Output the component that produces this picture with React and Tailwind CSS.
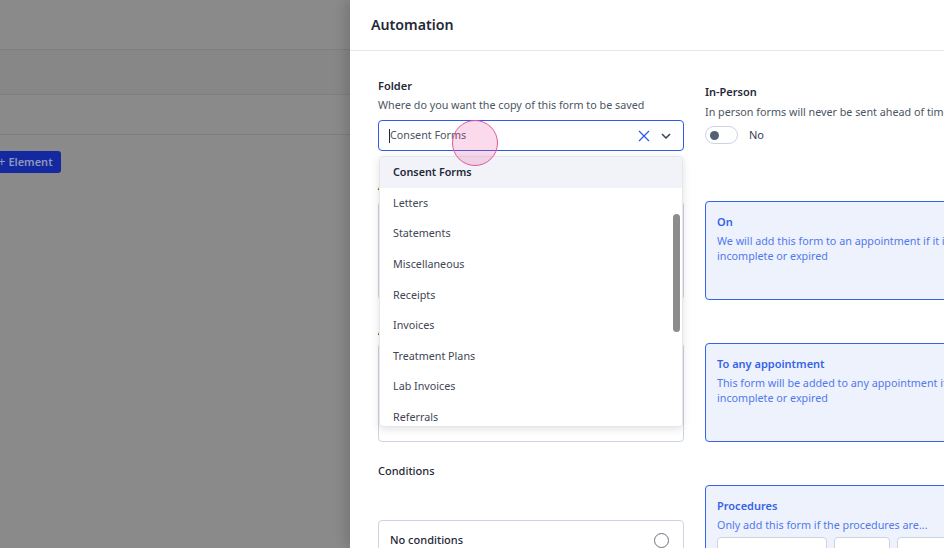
import React from 'react';

const FOLDERS = ['Consent Forms', 'Letters', 'Statements', 'Miscellaneous', 'Receipts', 'Invoices', 'Treatment Plans', 'Lab Invoices', 'Referrals', 'Other'];

function InfoCard({ title, children, className = '' }) {
  return (
    <div className={`rounded-[4px] border border-[#3563e9] bg-[#eef2fd] px-[11px] pt-[12px] ${className}`}>
      <p className="text-[11px] font-semibold leading-[16px] text-[#3563e9]">{title}</p>
      <p className="mt-[4px] text-[10.75px] leading-[15px] text-[#5079ec]">{children}</p>
    </div>
  );
}

export default function App() {
  return (
    <div className="flex h-[548px] w-[944px] overflow-hidden font-['Noto_Sans',sans-serif]">
      {/* dimmed page behind the drawer */}
      <div className="w-[350px] shrink-0 bg-[#8a8a8a]">
        <div className="h-[50px] border-b border-[#7c7e85]" />
        <div className="h-[45px] border-b border-[#7c7e85] bg-[#878788]" />
        <div className="h-[40px] border-b border-[#7c7e85]" />
        <div className="pt-[16px]">
          <button className="-ml-[10px] flex h-[22px] items-center gap-[3px] rounded-[3px] bg-[#1429a0] pl-[8px] pr-[8px] text-[11px] font-semibold text-[#8f97bd]">
            <span className="text-[13px] font-normal">+</span>
            Element
          </button>
        </div>
      </div>

      {/* drawer */}
      <div className="relative w-[680px] shrink-0 bg-white shadow-[-6px_0_10px_rgba(0,0,0,0.12)]">
        <div className="flex h-[51px] items-center border-b border-[#e2e8f0] px-[21px]">
          <h2 className="text-[14.2px] font-semibold text-[#1f2937]">Automation</h2>
        </div>

        <div className="flex gap-[21px] px-[28px]">
          {/* left column */}
          <div className="w-[306px] shrink-0">
            <p className="mt-[27px] text-[11px] font-semibold leading-[16px] text-[#1f2937]">Folder</p>
            <p className="mt-[3px] text-[10.75px] leading-[16px] text-[#4b5563]">Where do you want the copy of this form to be saved</p>

            <div className="relative mt-[7px]">
              <div className="flex h-[31px] items-center rounded-[4px] border border-[#2f5bea] pl-[10px] pr-[12px]">
                <span className="h-[14px] w-px bg-[#1f2937]" />
                <span className="flex-1 text-[10.75px] text-[#4b5563]">Consent Forms</span>
                <svg width="12" height="12" viewBox="0 0 12 12" fill="none" stroke="#2f5bea" strokeWidth="1.3">
                  <path d="M1 1l10 10M11 1L1 11" />
                </svg>
                <svg className="ml-[11px]" width="10" height="6" viewBox="0 0 10 6" fill="none" stroke="#374151" strokeWidth="1.5">
                  <path d="M1 1l4 4 4-4" />
                </svg>
              </div>

              {/* open dropdown */}
              <div className="absolute left-px right-px top-[36px] z-10 h-[271px] overflow-hidden rounded-[4px] border border-[#e5e7eb] bg-white shadow-[0_2px_8px_rgba(0,0,0,0.12)]">
                {FOLDERS.map((f, i) => (
                  <div
                    key={f}
                    className={`flex h-[30.6px] items-center px-[13px] text-[10.75px] ${i === 0 ? 'bg-[#f1f3f8] font-semibold text-[#1f2937]' : 'text-[#3f4654]'}`}
                  >
                    {f}
                  </div>
                ))}
                <div className="absolute right-[2px] top-[57px] h-[118px] w-[7px] rounded-full bg-[#8c8c8c]" />
              </div>

              {/* touch indicator */}
              <div className="absolute left-[74px] top-0 z-20 h-[46px] w-[46px] rounded-full border border-[#e0579b] bg-[#ec4899]/20" />
            </div>

            <p className="mt-[27px] text-[11px] font-semibold leading-[16px] text-[#1f2937]">Add to appointment</p>
            <div className="mt-[7px] h-[99px] rounded-[4px] border border-[#cbd5e1] bg-white" />
            <p className="mt-[23px] text-[11px] font-semibold leading-[16px] text-[#1f2937]">Appointments</p>
            <div className="mt-[4px] h-[99px] rounded-[4px] border border-[#cbd5e1] bg-white" />

            <p className="mt-[21px] text-[11px] font-medium leading-[16px] text-[#1f2937]">Conditions</p>
            <div className="mt-[41px] flex h-[44px] items-start justify-between rounded-[4px] border border-[#cbd5e1] pl-[11px] pr-[14px] pt-[11px]">
              <span className="text-[11px] font-medium leading-[16px] text-[#1f2937]">No conditions</span>
              <span className="mt-px h-[15px] w-[15px] rounded-full border border-[#6b7280]" />
            </div>
          </div>

          {/* right column */}
          <div className="w-[306px] shrink-0">
            <p className="mt-[33px] text-[11px] font-semibold leading-[16px] text-[#1f2937]">In-Person</p>
            <p className="mt-[4px] whitespace-nowrap text-[10.75px] leading-[16px] text-[#4b5563]">In person forms will never be sent ahead of time</p>
            <div className="mt-[6px] flex items-center gap-[11px]">
              <span className="flex h-[18px] w-[33px] items-center rounded-full border border-[#cbd5e1] pl-[4px]">
                <span className="h-[9px] w-[9px] rounded-full bg-[#566074]" />
              </span>
              <span className="text-[11px] text-[#374151]">No</span>
            </div>

            <InfoCard title="On" className="mt-[57px] h-[99px]">
              We will add this form to an appointment if it is incomplete or expired
            </InfoCard>
            <InfoCard title="To any appointment" className="mt-[43px] h-[99px]">
              This form will be added to any appointment if it is incomplete or expired
            </InfoCard>

            <div className="mt-[43px] h-[90px] rounded-[4px] border border-[#3563e9] bg-[#eef2fd] px-[11px] pt-[12px]">
              <p className="text-[11px] font-semibold leading-[16px] text-[#3563e9]">Procedures</p>
              <p className="mt-[4px] text-[10.75px] leading-[15px] text-[#5079ec]">Only add this form if the procedures are...</p>
              <div className="mt-[4px] flex gap-[7px]">
                <div className="h-[30px] w-[110px] rounded-[4px] border border-[#cbd5e1] bg-white" />
                <div className="h-[30px] w-[56px] rounded-[4px] border border-[#cbd5e1] bg-white" />
                <div className="h-[30px] w-[80px] rounded-[4px] border border-[#cbd5e1] bg-white" />
              </div>
            </div>
          </div>
        </div>
      </div>
    </div>
  );
}
